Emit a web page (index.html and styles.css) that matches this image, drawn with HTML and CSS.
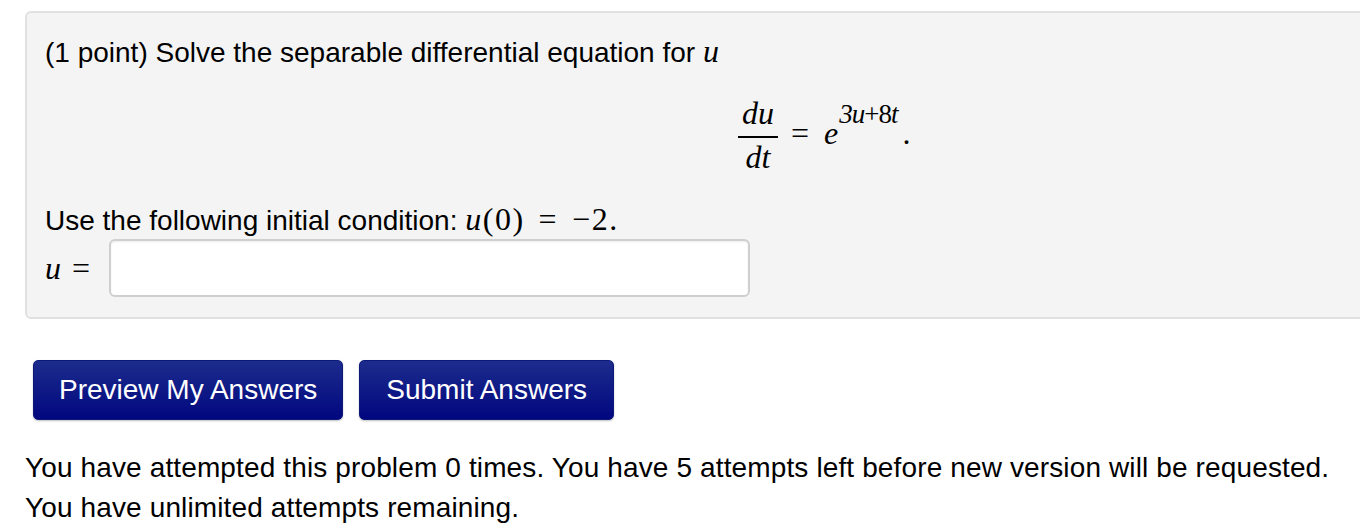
FILE: index.html
```html
<!DOCTYPE html>
<html>
<head>
<meta charset="utf-8">
<link rel="stylesheet" href="styles.css">
</head>
<body>
<div class="page">
  <div class="problem">
    <p class="intro">(1 point) Solve the separable differential equation for <span class="m mi">u</span></p>
    <div class="display"><span class="frac"><span class="num mi">du</span><span class="den mi">dt</span></span><span class="eq">=</span><span class="mi">e</span><span class="sup"><span class="mi">3u</span>+8<span class="mi">t</span></span><span class="dot">.</span></div>
    <p class="cond">Use the following initial condition: <span class="m cm"><span class="mi">u</span>(0)<span class="rel">=</span>−2.</span></p>
    <div class="answer">
      <span class="m"><span class="mi">u</span><span class="rel">=</span></span>
      <input class="field" type="text">
    </div>
  </div>
  <div class="buttons">
    <button class="btn">Preview My Answers</button>
    <button class="btn btn-submit">Submit Answers</button>
  </div>
  <p class="attempts">You have attempted this problem 0 times. You have 5 attempts left before new version will be requested.<br>You have unlimited attempts remaining.</p>
</div>
</body>
</html>
```
FILE: styles.css
```css
html, body {
  margin: 0;
  padding: 0;
  background: #fff;
  overflow: hidden;
}
body {
  font-family: "Liberation Sans", Arial, Helvetica, sans-serif;
  color: #000;
  font-size: 28px;
}
.page {
  padding: 11px 0 0 25px;
}
.problem {
  background: #f4f4f4;
  border: 2px solid #e1e1e1;
  border-radius: 6px;
  margin-right: -40px;
  padding: 21px 20px 20px 18px;
}
.intro, .cond {
  margin: 0;
  line-height: 34px;
}
.m {
  font-family: "Liberation Serif", "Times New Roman", serif;
  font-size: 32px;
}
.mi {
  font-style: italic;
}
.rel {
  margin: 0 9px;
}
.cm {
  letter-spacing: 1.5px;
}
.cm .rel {
  margin: 0 14px;
}
.display {
  font-family: "Liberation Serif", "Times New Roman", serif;
  font-size: 32px;
  line-height: 32px;
  padding: 28px 0 30px 693px;
  white-space: nowrap;
}
.frac {
  display: inline-flex;
  flex-direction: column;
  align-items: center;
  vertical-align: 20px;
}
.frac .num {
  border-bottom: 2px solid #000;
  padding: 0 4px 8px;
  line-height: 30px;
}
.frac .den {
  padding-top: 4px;
  line-height: 30px;
}
.eq {
  margin: 0 15px 0 13px;
}
.sup {
  font-size: 27px;
  line-height: 26px;
  letter-spacing: -1px;
  vertical-align: 21px;
  margin-left: 1px;
}
.dot {
  margin-left: 5px;
}
.answer {
  display: flex;
  align-items: center;
  margin-top: 1px;
  gap: 19px;
}
.answer .rel {
  margin-right: 0;
  margin-left: 11px;
}
.field {
  width: 641px;
  height: 58px;
  box-sizing: border-box;
  border: 2px solid #cfcfcf;
  border-radius: 6px;
  background: #fff;
  box-shadow: inset 0 1px 2px rgba(0,0,0,0.08);
  margin: 0;
}
.buttons {
  display: flex;
  gap: 16px;
  margin: 41px 0 0 8px;
}
.btn {
  font-family: "Liberation Sans", Arial, Helvetica, sans-serif;
  font-size: 28px;
  color: #fff;
  height: 60px;
  padding: 0 25px;
  border: 1px solid #0b1a78;
  border-radius: 5px;
  background: linear-gradient(#1c2c8c, #01077f);
  box-shadow: 0 1px 2px rgba(0,0,0,0.25);
}
.btn-submit {
  padding: 0 26px;
}
.attempts {
  margin: 28px 0 0 0;
  line-height: 40px;
  letter-spacing: 0.13px;
}
```
